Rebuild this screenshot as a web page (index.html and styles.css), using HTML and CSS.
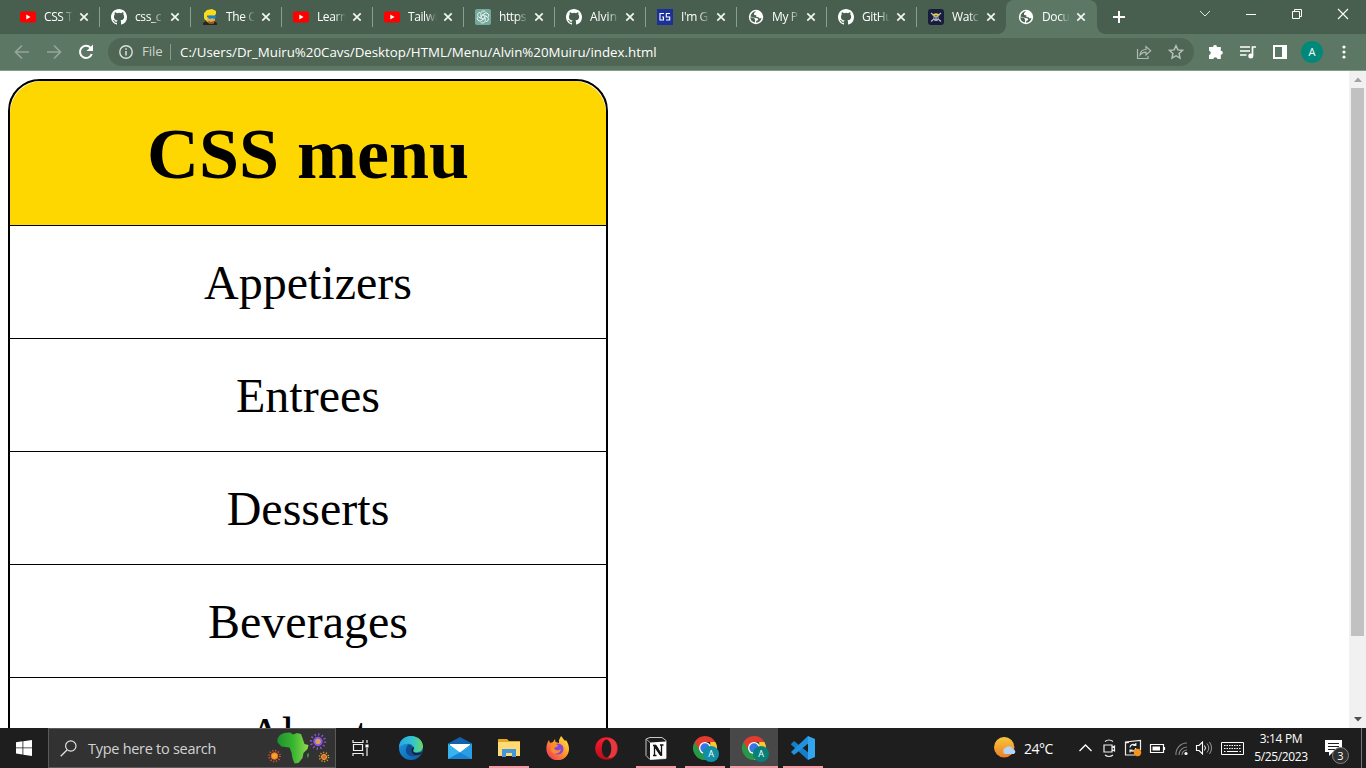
FILE: index.html
```html
<!DOCTYPE html>
<html lang="en">
<head>
<meta charset="utf-8">
<title>Document</title>
<link rel="stylesheet" href="styles.css">
</head>
<body>
<svg class="defs" width="0" height="0">
  <defs>
    <symbol id="yt" viewBox="0 0 16 16"><rect y="2.5" width="16" height="11" rx="2" fill="#f00"/><path d="M6.3 5.6v4.8l4.2-2.4z" fill="#fff"/></symbol>
    <symbol id="gh" viewBox="0 0 16 16"><path fill="#fff" d="M8 0C3.58 0 0 3.58 0 8c0 3.54 2.29 6.53 5.47 7.59.4.07.55-.17.55-.38v-1.49c-2.01.37-2.53-.49-2.69-.94-.09-.23-.48-.94-.82-1.13-.28-.15-.68-.52-.01-.53.63-.01 1.08.58 1.23.82.72 1.21 1.87.87 2.33.66.07-.52.28-.87.51-1.07-1.78-.2-3.64-.89-3.64-3.95 0-.87.31-1.59.82-2.15-.08-.2-.36-1.02.08-2.12 0 0 .67-.21 2.2.82a7.6 7.6 0 0 1 4 0c1.53-1.04 2.2-.82 2.2-.82.44 1.1.16 1.92.08 2.12.51.56.82 1.27.82 2.15 0 3.07-1.87 3.75-3.65 3.95.29.25.54.73.54 1.48v2.2c0 .21.15.46.55.38A8 8 0 0 0 16 8c0-4.42-3.58-8-8-8z"/></symbol>
    <symbol id="globe" viewBox="0 0 16 16"><circle cx="8" cy="8" r="7.2" fill="#fff"/><path fill="#4b6352" d="M8.3 2.3 6.2 4.1v2l2.1.2v1.6l2.2.3 1.1 1.4 1.9-.5a6 6 0 0 1-5.3 4.7V12L10.3 11l-.5-1.6-4.1-.9L2.4 7.4A5.8 5.8 0 0 1 8.3 2.3z"/><path fill="#fff" d="M8.3 2.2h2.5v2.3l-2 1.7-2.4-.5V4.2z"/><path fill="#4b6352" d="M2.3 8.3 6 8.8l1.2 2.1-.5 2.6a5.700 5.700 0 0 1-4.400-5.200z"/></symbol>
    <symbol id="close" viewBox="0 0 10 10"><path d="M1.3 1.3l7.4 7.4M8.7 1.3L1.3 8.7" stroke="#f2f5f3" stroke-width="1.7"/></symbol>
    <symbol id="chrome" viewBox="0 0 28 28"><path d="M3.600 7A12 12 0 0 0 14 25l5.200-9-5.200-3z" fill="#279847"/><path d="M24.400 7A12 12 0 0 1 14 25l5.200-9V7z" fill="#fdc827"/><path d="M3.600 7A12 12 0 0 1 24.400 7H14l-5 9z" fill="#e33b2e"/><circle cx="14" cy="13" r="6" fill="#fff"/><circle cx="14" cy="13" r="4.700" fill="#3576e5"/></symbol>
  </defs>
</svg>

<header class="browser">
  <div class="tabstrip">
    <div class="tab"><svg class="fav"><use href="#yt"/></svg><span class="title">CSS T</span><svg class="x"><use href="#close"/></svg></div>
    <div class="tab"><svg class="fav"><use href="#gh"/></svg><span class="title">css_c</span><svg class="x"><use href="#close"/></svg></div>
    <div class="tab"><svg class="fav" viewBox="0 0 16 16"><path d="M1 16v-2l3-2h8l3 2v2z" fill="#28251f"/><path d="M4 6h9v5l-2 4H8l-4-3z" fill="#e8ad4c"/><path d="M2 9V4l3-3 5-1 4 2v3l-2 2-5-1-2 5H3z" fill="#f8dc19"/><path d="M5 6.500h9v2l-2 1.500-2-1-2 1-3-2z" fill="#1582c9"/><path d="M6 12l3 1 3-1-1 3H7z" fill="#8a5b20"/></svg><span class="title">The C</span><svg class="x"><use href="#close"/></svg></div>
    <div class="tab"><svg class="fav"><use href="#yt"/></svg><span class="title">Learn</span><svg class="x"><use href="#close"/></svg></div>
    <div class="tab"><svg class="fav"><use href="#yt"/></svg><span class="title">Tailwi</span><svg class="x"><use href="#close"/></svg></div>
    <div class="tab"><svg class="fav" viewBox="0 0 16 16"><rect width="16" height="16" rx="2" fill="#74aa9c"/><g fill="none" stroke="#fff" stroke-width=".8"><path d="M8 6 5.800 7.200V3.900A2.700 2.700 0 0 1 10.500 3"/><path d="M8 6 5.800 7.200V3.900A2.700 2.700 0 0 1 10.500 3" transform="rotate(60 8 8)"/><path d="M8 6 5.800 7.200V3.900A2.700 2.700 0 0 1 10.500 3" transform="rotate(120 8 8)"/><path d="M8 6 5.800 7.200V3.900A2.700 2.700 0 0 1 10.500 3" transform="rotate(180 8 8)"/><path d="M8 6 5.800 7.200V3.900A2.700 2.700 0 0 1 10.500 3" transform="rotate(240 8 8)"/><path d="M8 6 5.800 7.200V3.900A2.700 2.700 0 0 1 10.500 3" transform="rotate(300 8 8)"/></g></svg><span class="title">https</span><svg class="x"><use href="#close"/></svg></div>
    <div class="tab"><svg class="fav"><use href="#gh"/></svg><span class="title wide">Alvin</span><svg class="x"><use href="#close"/></svg></div>
    <div class="tab"><svg class="fav" viewBox="0 0 16 16"><rect width="16" height="16" fill="#1c309a"/><path d="M7 4.500H3v6.500h3.500V8H5M13 4.500H9.300V8h3.400v3H9" fill="none" stroke="#fff" stroke-width="1.100"/></svg><span class="title">I'm G</span><svg class="x"><use href="#close"/></svg></div>
    <div class="tab short"><svg class="fav"><use href="#globe"/></svg><span class="title">My P</span><svg class="x"><use href="#close"/></svg></div>
    <div class="tab short"><svg class="fav"><use href="#gh"/></svg><span class="title">GitHu</span><svg class="x"><use href="#close"/></svg></div>
    <div class="tab short last"><svg class="fav" viewBox="0 0 16 16"><rect width="16" height="16" rx="3" fill="#191d3d"/><path d="M3 4l10 8.500M13 4L3 12.500" stroke="#b9bbc6" stroke-width="1.200"/><path d="M5.500 7h5v3l-1 2h-3l-1-2z" fill="#a9abb5"/><path d="M4.500 6.500c1-3 6-3 7 0z" fill="#e7cf35"/><path d="M6 9h1.500M8.600 9h1.500" stroke="#191d3d"/></svg><span class="title">Watc</span><svg class="x"><use href="#close"/></svg></div>
    <div class="tab active"><svg class="fav"><use href="#globe"/></svg><span class="title">Docu</span><svg class="x"><use href="#close"/></svg></div>
    <svg class="newtab" viewBox="0 0 12 12"><path d="M6 0v12M0 6h12" stroke="#fff" stroke-width="2"/></svg>
    <div class="winctl">
      <svg viewBox="0 0 46 28"><path d="M18 11l5 5 5-5" fill="none" stroke="#dfe5e1"/></svg>
      <svg viewBox="0 0 46 28"><path d="M18 14.500h10" stroke="#fff"/></svg>
      <svg viewBox="0 0 46 28"><path d="M18.500 11.500h7v7h-7zM20.500 11V9.500h7v7H26" fill="none" stroke="#fff"/></svg>
      <svg viewBox="0 0 46 28"><path d="M18 9l10 10M28 9L18 19" stroke="#fff" stroke-width="1.100"/></svg>
    </div>
  </div>
  <div class="toolbar">
    <svg class="nav" viewBox="0 0 16 16"><path d="M15 8H2M8 1.500L1.500 8 8 14.500" fill="none" stroke="#94a799" stroke-width="1.700"/></svg>
    <svg class="nav" viewBox="0 0 16 16"><path d="M1 8h13M8 1.500L14.500 8 8 14.500" fill="none" stroke="#94a799" stroke-width="1.700"/></svg>
    <svg class="nav" viewBox="0 0 16 16"><path d="M13.800 10A6.100 6.100 0 1 1 12.600 3.800" fill="none" stroke="#fff" stroke-width="2"/><path d="M15 .5v6.500H8.500z" fill="#fff"/></svg>
    <div class="omnibox">
      <svg class="info" viewBox="0 0 14 14"><circle cx="7" cy="7" r="6.200" fill="none" stroke="#dbe1dd" stroke-width="1.400"/><path d="M7 6v4.500M7 3.300v1.500" stroke="#dbe1dd" stroke-width="1.500"/></svg>
      <span class="scheme">File</span>
      <span class="url">C:/Users/Dr_Muiru%20Cavs/Desktop/HTML/Menu/Alvin%20Muiru/index.html</span>
      <svg class="share" viewBox="0 0 16 16"><path d="M1.500 5v9.500H12V12" fill="none" stroke="#aebbb2" stroke-width="1.200"/><path d="M4 11c.4-4 2.500-5.500 6-5.500V2.500l4.700 4.300L10 11V8.200C7 8.200 5.500 9 4 11z" fill="none" stroke="#aebbb2" stroke-width="1.200"/></svg>
      <svg class="star" viewBox="0 0 16 16"><path d="M8 1.700l1.900 4.200 4.600.5-3.400 3.100.9 4.500-4-2.300L4 14l.9-4.500-3.400-3.100 4.600-.5z" fill="none" stroke="#b9c4bc" stroke-width="1.400"/></svg>
    </div>
    <svg class="ext" viewBox="0 0 16 16"><path d="M5 3a2 2 0 0 1 4 0h3.800v3.700a2 2 0 0 1 0 4V15H9.500a2.200 2.200 0 0 0-4.300 0H1v-4a2.200 2.200 0 0 0 0-4.300V3z" fill="#fff"/></svg>
    <svg class="ext media" viewBox="0 0 16 14"><path d="M0 2h10M0 6h10M0 10h6.500M12.500 10.500V2H16" fill="none" stroke="#fff" stroke-width="1.700"/><circle cx="10.800" cy="10.900" r="2.500" fill="#fff"/></svg>
    <svg class="ext panel" viewBox="0 0 14 14"><path fill="#fff" fill-rule="evenodd" d="M0 0h14v14H0zM2 2v10h7V2z"/></svg>
    <span class="avatar">A</span>
    <svg class="dots" viewBox="0 0 4 14"><circle cx="2" cy="2" r="1.600" fill="#fff"/><circle cx="2" cy="7" r="1.600" fill="#fff"/><circle cx="2" cy="12" r="1.600" fill="#fff"/></svg>
  </div>
</header>

<main class="viewport">
  <nav class="page">
    <div class="menu">
      <h1 class="menu-title">CSS menu</h1>
      <div class="item">Appetizers</div>
      <div class="item">Entrees</div>
      <div class="item">Desserts</div>
      <div class="item">Beverages</div>
      <div class="item">About</div>
    </div>
  </nav>
  <div class="scrollbar">
    <svg viewBox="0 0 17 17"><path d="M5 11h8L9 6.500z" fill="#a3a3a3"/></svg>
    <div class="thumb"></div>
    <svg class="down" viewBox="0 0 17 17"><path d="M5 6h8l-4 4.500z" fill="#505050"/></svg>
  </div>
</main>

<footer class="taskbar">
  <div class="start"><svg width="16" height="16" viewBox="0 0 16 16"><path fill="#fff" d="M0 2.200L6.500 1.300v6.200H0zM7.300 1.200L16 0v7.500H7.300zM0 8.300h6.500v6.200L0 13.600zM7.300 8.300H16V16l-8.700-1.300z"/></svg></div>
  <div class="search">
    <svg width="17" height="17" viewBox="0 0 17 17"><circle cx="10.800" cy="6" r="5.200" fill="none" stroke="#e2e2e2" stroke-width="1.200"/><path d="M7 10L.7 16.200" stroke="#e2e2e2" stroke-width="1.300"/></svg>
    <span class="hint">Type here to search</span>
    <svg class="africa" width="64" height="34" viewBox="0 0 64 34">
      <defs><linearGradient id="af"><stop offset="0" stop-color="#20912e"/><stop offset=".5" stop-color="#37b52f"/><stop offset="1" stop-color="#91d850"/></linearGradient></defs>
      <path d="M12 3l4-2 6-.5 3 2 4-1.500 4 1 1.500 4 2 6 4 1-1 4-4 4-1 5-4 5-4 .5-2-5-1-6-2-5-8-1-4-4 0-4z" fill="url(#af)"/><path d="M39 22l2-1v3l-1 1.500h-1z" fill="#29963a"/>
      <circle cx="50" cy="9.500" r="7" fill="none" stroke="#8a56dc" stroke-width="2.400" stroke-dasharray="1.300 2.360"/><circle cx="50" cy="9.500" r="3.700" fill="#d9a15f" stroke="#8b55e5" stroke-width="2"/>
      <circle cx="6.500" cy="24" r="5.500" fill="none" stroke="#cf5332" stroke-width="1.800" stroke-dasharray="1.200 1.680"/><circle cx="6.500" cy="24" r="3.300" fill="#f3a329" stroke="#ee6e23"/>
      <circle cx="56" cy="25" r="4.500" fill="none" stroke="#dba22d" stroke-width="1.600" stroke-dasharray="1.100 1.730"/><circle cx="56" cy="25" r="2.500" fill="#e95f25" stroke="#efb334"/>
    </svg>
  </div>
  <div class="taskview"><svg width="17" height="16" viewBox="0 0 17 16"><path d="M1 0v2.500h10V0M1 16v-2.500h10V16M1.500 4.500h9v6h-9zM15 0v3M15 8v8" fill="none" stroke="#eee" stroke-width="1.200"/><path d="M13.500 4.500h3v3h-3z" fill="#fff"/></svg></div>
  <div class="apps">
    <div class="app"><svg width="24" height="24" viewBox="0 0 24 24"><defs><linearGradient id="e1"><stop stop-color="#26a8e5"/><stop offset=".6" stop-color="#36c6ca"/><stop offset="1" stop-color="#6ad960"/></linearGradient><linearGradient id="e2" x2="1" y2="1"><stop stop-color="#1b9de2"/><stop offset="1" stop-color="#0c58a9"/></linearGradient></defs><circle cx="12" cy="12" r="12" fill="url(#e2)"/><path d="M0 11C1-4 23-3 24 10c0 4-3 7-8 6-3-.5-3-2-2-3 2-5-6-8-14-2z" fill="url(#e1)"/><path d="M9 9c-5 5-1 13 7 11 3-.4 5-1.800 6.500-3-1 1-8 2-8.500-2-1-2 1-2-1-5-1-1-3-2-4-1z" fill="#0e4d94"/><path d="M14.500 10.500c2 3-3 5 2 6.500 2 .4 4 0 6.500-1l-.8 1.500c-4 3-8.500 1.500-9.500-2-.6-2 .5-3 1.800-5z" fill="#1e1e1e"/></svg></div>
    <div class="app"><svg width="24" height="24" viewBox="0 0 24 24"><path d="M0 7.500L12 1l12 6.500V12H0z" fill="#1261ad"/><path d="M2 8h20v7L12 20 2 15z" fill="#fff"/><path d="M0 7.500l12 9 12-9V23H0z" fill="#37b4ee"/><path d="M0 23l12-6.500L24 7.500V23z" fill="#2a9ee5"/><path d="M12 16.500L24 23H0z" fill="#1685d5"/></svg></div>
    <div class="app run"><svg width="22" height="20" viewBox="0 0 22 20"><path d="M0 1h9l2 2h11v15H0z" fill="#e6a522"/><path d="M0 4h22v14H0z" fill="#ffdb73"/><path d="M4 19v-8h14v8h-4v-4H8v4z" fill="#4196dc"/></svg></div>
    <div class="app"><svg width="24" height="24" viewBox="0 0 24 24"><defs><linearGradient id="ff" x1="1" x2="0" y2="1"><stop stop-color="#fff44b"/><stop offset=".45" stop-color="#ff9828"/><stop offset="1" stop-color="#f12867"/></linearGradient></defs><path d="M3 4l1 3 3-1 2-3 .5 3 3.500 1V4l2-4c2 2 3 4 4 5l1-1c2 3 3 6 3 9a11.300 11.300 0 0 1-22.600 0c0-4 .6-6 2.600-9z" fill="url(#ff)"/><circle cx="12" cy="13" r="5.500" fill="#8748d9"/><path d="M5 8c3-1 5 0 7 1 0 2-3 2-4 3 1 3 5 3 7 1-1 6-9 6-10 1z" fill="#ff8b29"/></svg></div>
    <div class="app"><svg width="23" height="23" viewBox="0 0 23 23"><defs><linearGradient id="op" x2="0" y2="1"><stop stop-color="#ff1b2d"/><stop offset="1" stop-color="#b70d1d"/></linearGradient></defs><ellipse cx="11.500" cy="11.500" rx="11.300" ry="11.300" fill="url(#op)"/><path d="M13 2.500c6-2 9 3 9 9s-4 11-9 9z" fill="#e5383f"/><ellipse cx="11.500" cy="11.500" rx="4.800" ry="9" fill="#1e1e1e"/></svg></div>
    <div class="app run"><svg width="22" height="23" viewBox="0 0 22 23"><path d="M1 2l4-1.500L17 .5l4 3v18l-16 1-4-4z" fill="#1d1d1d" stroke="#c9c9c9"/><path d="M5 5.500L21 4.500v17L5 22.500z" fill="#fff"/><path d="M1 2l4 3.500" stroke="#aaa"/><path d="M9.500 9v9.500M16.500 8v10.500M8 18.500h3.500M15 8h3.500" stroke="#111" stroke-width="1.300"/><path d="M8 8.200h3l6 10h-1.800L9 9z" fill="#111" stroke="#111"/></svg></div>
    <div class="app run"><svg class="chrome"><use href="#chrome"/></svg><span class="badge blue">A</span></div>
    <div class="app run current"><svg class="chrome"><use href="#chrome"/></svg><span class="badge">A</span></div>
    <div class="app run"><svg width="24" height="24" viewBox="0 0 24 24"><path d="M0 8l3-3 15.500 12.500L17 24 0 8.500z" fill="#1580c9"/><path d="M17 0l1.500 6.500L3 19l-3-3z" fill="#2192de"/><path d="M17 0l7 3v18l-7 3z" fill="#32a5ef"/></svg></div>
  </div>
  <div class="tray">
    <svg class="weather" width="23" height="22" viewBox="0 0 23 22"><defs><linearGradient id="sun" x2="0" y2="1"><stop stop-color="#f7c63d"/><stop offset="1" stop-color="#ee7e27"/></linearGradient></defs><circle cx="10.200" cy="10.200" r="10.200" fill="url(#sun)"/><path d="M11 17a3.500 3.500 0 0 1 1-6.500 4.200 4.200 0 0 1 7 1.800 2.500 2.500 0 0 1 1 4.700z" fill="#b5d2f8"/></svg>
    <span class="temp">24°C</span>
    <svg class="t caret" viewBox="0 0 24 20"><path d="M6.500 13l6-6 6 6" fill="none" stroke="#fff" stroke-width="1.300"/></svg>
    <svg class="t" viewBox="0 0 24 20"><path d="M7 7h8v7H7zM15 9.500l2.500-1.500v5L15 11.500M8 3.500q4-3 8 0M8 17q4 3 8 0" fill="none" stroke="#eee" stroke-width="1.200"/></svg>
    <svg class="t" viewBox="0 0 24 20"><path d="M14 17H4.500V4L19.500 2.500V12M4 5l4-.5" fill="none" stroke="#eee" stroke-width="1.200"/><path d="M9 9.500a3.300 3.300 0 0 1 5.500-2.300M14.800 10a3.300 3.300 0 0 1-5.500 2.300M14.800 5v2.500h-2.500M9 14.500V12h2.500" fill="none" stroke="#eee" stroke-width="1.200"/><circle cx="16.500" cy="14.500" r="3.700" fill="#f79317"/></svg>
    <svg class="t" viewBox="0 0 24 20"><path d="M5.500 6.500h13v8h-13zM19.500 9v3" fill="none" stroke="#fff" stroke-width="1.200"/><path d="M7.500 8.500H15v4H7.500z" fill="#fff"/></svg>
    <svg class="t" viewBox="0 0 24 20"><path d="M7 17A11 11 0 0 1 18 5M10 17a8 8 0 0 1 8-8M13 17a5 5 0 0 1 5-5" fill="none" stroke="#888" stroke-width="1.100"/><circle cx="17" cy="15.500" r="1.600" fill="#fff"/></svg>
    <svg class="t" viewBox="0 0 24 20"><path d="M3.500 7.500h2.500L9.500 4v12L6 12.500H3.500z" fill="none" stroke="#fff" stroke-width="1.100"/><path d="M11.500 7.500q2 2.500 0 5" fill="none" stroke="#fff"/><path d="M14 5.500q3.500 4.500 0 9M16.500 4q4 6 0 12" fill="none" stroke="#999"/></svg>
    <svg class="keyboard" viewBox="0 0 23 13"><path d="M.5.500h22v12H.5z" fill="none" stroke="#fff"/><path d="M3 3.500h17M3 6.500h17" stroke="#fff" stroke-width="1.200" stroke-dasharray="1.500 1"/><path d="M3 9.500h1.500M6 9.500h11M18.500 9.500H20" stroke="#fff"/></svg>
    <div class="clock"><span>3:14 PM</span><span class="date">5/25/2023</span></div>
    <div class="notify"><svg width="17" height="17" viewBox="0 0 17 17"><path d="M0 0h17v12H8l-4 4v-4H0z" fill="#fff"/><path d="M3 3.500h11M3 6.500h11M3 9.500h7" stroke="#1e1e1e"/></svg><span class="count">3</span></div>
  </div>
</footer>
</body>
</html>
```
FILE: styles.css
```css
* { box-sizing: border-box; }
body { margin: 0; width: 1366px; height: 768px; overflow: hidden; background: #fff; display: flex; flex-direction: column; font-family: "Open Sans", "Noto Sans", sans-serif; }
svg { display: block; flex: none; }
.defs { position: absolute; }

.browser { flex: none; height: 71px; background: #5c7764; border-bottom: 1px solid #869c8b; }
.tabstrip { height: 34px; padding-left: 8px; background: #485f4f; display: flex; align-items: center; }
.tab { flex: none; width: 91px; height: 20px; padding-left: 12px; display: flex; align-items: center; box-shadow: 1px 0 #8b9c90; }
.tab.short { width: 90px; }
.tab.last { box-shadow: none; }
.tab.active { height: 34px; background: #5c7764; border-radius: 8px 8px 0 0; position: relative; box-shadow: none; }
.tab.active::before, .tab.active::after { content: ""; position: absolute; bottom: 0; width: 8px; height: 8px; }
.tab.active::before { left: -8px; background: radial-gradient(circle at 0 0, #485f4f 7.5px, #5c7764 8px); }
.tab.active::after { right: -8px; background: radial-gradient(circle at 100% 0, #485f4f 7.5px, #5c7764 8px); }
.fav { width: 16px; height: 16px; }
.title { width: 29px; margin: 0 6px 0 8px; white-space: nowrap; font-size: 12px; line-height: 18px; letter-spacing: -.4px; color: #fff; -webkit-mask-image: linear-gradient(90deg, #000 60%, transparent); mask-image: linear-gradient(90deg, #000 60%, transparent); }
.title.wide { letter-spacing: 0; }
.short .title, .active .title { width: 28px; }
.x { width: 10px; height: 10px; }
.newtab { width: 12px; height: 12px; margin-left: 16px; }
.winctl { display: flex; margin-left: auto; height: 28px; align-self: flex-start; }
.winctl svg { width: 46px; height: 28px; }

.toolbar { height: 36px; padding-left: 14px; display: flex; align-items: center; }
.nav { width: 16px; height: 16px; margin-right: 16px; }
.omnibox { width: 1086px; height: 28px; margin-left: -2px; padding-left: 11px; border-radius: 14px; background: #4f6654; display: flex; align-items: center; color: #fff; font-size: 13.3px; }
.info { width: 14px; height: 14px; }
.scheme { margin-left: 9px; width: 29px; height: 16px; line-height: 15px; color: #cdd5cf; border-right: 1px solid #899a8d; letter-spacing: -.1px; }
.url { margin-left: 9px; line-height: 16px; white-space: nowrap; }
.share { width: 16px; height: 16px; margin-left: auto; }
.star { width: 16px; height: 16px; margin: 0 10px 0 16px; }
.ext { width: 16px; height: 16px; margin-left: 14px; }
.media { height: 14px; margin-left: 16px; }
.panel { width: 14px; height: 14px; margin-left: 17px; }
.avatar { width: 22px; height: 22px; margin-left: 14px; border-radius: 50%; background: #00897b; color: #fff; font-size: 11px; line-height: 22px; text-align: center; }
.dots { width: 4px; height: 14px; margin-left: 19px; }

.viewport { flex: none; height: 657px; display: flex; overflow: hidden; }
.page { flex: 1; padding: 8px; }
.menu { width: 600px; border: 2px solid #000; border-radius: 32px; font-family: "Liberation Serif", "Times New Roman", serif; text-align: center; color: #000; }
.menu-title { margin: 0; height: 145px; line-height: 146px; font-size: 72px; font-weight: bold; background: #ffd700; border-bottom: 1px solid #000; border-radius: 32px 32px 0 0; }
.item { height: 113px; line-height: 114px; font-size: 48px; border-bottom: 1px solid #000; }
.scrollbar { width: 17px; background: #f1f1f1; display: flex; flex-direction: column; }
.scrollbar svg { width: 17px; height: 17px; }
.thumb { width: 13px; height: 548px; margin-left: 2px; background: #c1c1c1; }
.scrollbar .down { margin-top: auto; }

.taskbar { flex: none; height: 40px; background: #1e1e1e; display: flex; color: #fff; position: relative; }
.start { width: 48px; display: flex; align-items: center; justify-content: center; }
.search { width: 288px; padding-left: 11px; background: #323232; border: 1px solid #5b5b5b; display: flex; align-items: center; }
.hint { margin-left: 11px; width: 180px; font-size: 14.5px; line-height: 20px; letter-spacing: -.28px; color: #d2d2d2; padding-top: 1px; }
.africa { margin-top: 2px; }
.taskview { width: 50px; padding-left: 16px; display: flex; align-items: center; }
.apps { display: flex; }
.app { width: 49px; display: flex; align-items: center; justify-content: center; position: relative; }
.run::after { content: ""; position: absolute; left: 5px; bottom: 0; width: 40px; height: 2px; background: #f59aa5; }
.current { margin-left: 1px; width: 48px; background: #484848; }
.current::after { left: 0; width: 48px; }
.chrome { width: 28px; height: 28px; margin-top: 1px; }
.badge { position: absolute; left: 23px; top: 18px; width: 16px; height: 16px; border-radius: 50%; background: #087f78; color: #fff; font-size: 9px; line-height: 16px; text-align: center; }
.badge.blue { background: #128fa3; }
.tray { margin-left: auto; display: flex; align-items: center; width: 372px; }
.temp { margin-left: 7px; width: 49px; font-size: 14px; letter-spacing: -.5px; line-height: 20px; padding-top: 1px; }
.t { width: 24px; height: 20px; }
.keyboard { width: 23px; height: 13px; margin-left: 4px; }
.clock { width: 74px; font-size: 12px; line-height: 18px; letter-spacing: -.35px; display: flex; flex-direction: column; align-items: center; }
.notify { width: 44px; height: 40px; padding: 12px 0 0 7px; border-right: 1px solid #777; position: relative; }
.count { position: absolute; left: 14px; top: 19px; width: 17px; height: 17px; border-radius: 50%; background: #303030; border: 1px solid #858585; font-size: 11px; line-height: 15px; text-align: center; }
```
